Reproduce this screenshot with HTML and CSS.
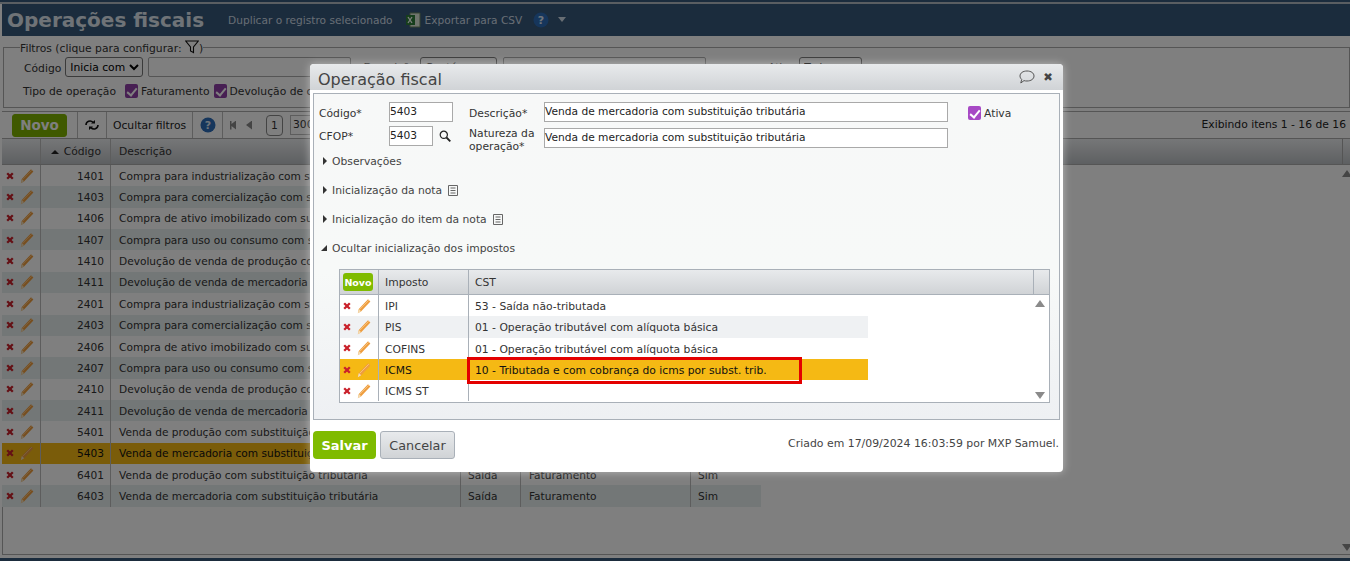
FILE: index.html
```html
<!DOCTYPE html>
<html lang="pt-BR">
<head>
<meta charset="utf-8">
<title>Operações fiscais</title>
<link rel="stylesheet" href="styles.css">
</head>
<body>
<svg width="0" height="0" class="defs">
  <symbol id="x" viewBox="0 0 8 8"><path d="M1.2 1.200l5.600 5.600M6.800 1.200l-5.600 5.600" stroke="#c9202a" stroke-width="2.300"/></symbol>
  <symbol id="pen" viewBox="0 0 14 16"><path d="M.8 15.200l1-4.200L11 1.300l2.400 2.200-9.200 9.700z" fill="#ee9d3e"/><path d="M.8 15.200l1-4.200 2.400 2.200z" fill="#f3dcb5"/><path d="M2.700 11.400L11.800 2.200" stroke="#f9c98a" stroke-width=".8"/></symbol>
  <symbol id="help" viewBox="0 0 16 16"><circle cx="8" cy="8" r="7.500" fill="#2c6cb8"/><text x="8" y="12" text-anchor="middle" font-size="11" font-weight="700" font-family="DejaVu Sans" fill="#dfe9f5">?</text></symbol>
  <symbol id="doc" viewBox="0 0 10 11"><path d="M.5.5h9v10h-9zM2.500 3h5M2.500 5.500h5M2.500 8h5" fill="none" stroke="#666"/></symbol>
</svg>

<div class="page">
  <header class="top">
    <h1>Operações fiscais</h1>
    <span class="top-link">Duplicar o registro selecionado</span>
    <svg class="xls" viewBox="0 0 16 16" width="16" height="16"><path d="M5 1h10v14H5z" fill="#dfe8da" stroke="#6f8a63"/><path d="M1 3h9v10H1z" fill="#2d7d38"/><path d="M3 5l4 6M7 5l-4 6" stroke="#fff" stroke-width="1.300"/></svg>
    <span class="top-link">Exportar para CSV</span>
    <svg class="top-help" width="16" height="16"><use href="#help"/></svg>
    <span class="caret"></span>
  </header>

  <fieldset class="filters">
    <legend>Filtros (clique para configurar: <svg class="funnel" viewBox="0 0 14 14" width="14" height="14"><path d="M.7 1h12.600L8.500 7v5.500L5.500 11V7z" fill="none" stroke="#111" stroke-width="1.100"/></svg>)</legend>
    <div class="filter-row">
      <span class="f-code">Código</span>
      <select class="sel"><option>Inicia com</option></select>
      <span class="blank-input"></span>
      <span class="hidden-label">Descrição</span>
      <select class="sel sel2"><option>Contém</option></select>
      <span class="blank-input input2"></span>
      <span class="hidden-label label3">Ativa</span>
      <select class="sel sel3"><option>Todos</option></select>
    </div>
    <div class="filter-row second">
      <span>Tipo de operação</span>
      <span class="chk"></span><span class="lbl">Faturamento</span>
      <span class="chk"></span><span class="lbl">Devolução de compra</span>
    </div>
  </fieldset>

  <div class="toolbar">
    <button class="new">Novo</button>
    <span class="tool refresh"><svg viewBox="0 0 14 12" width="14" height="12"><path d="M1 6a4 4 0 0 1 7-2.600M13 6a4 4 0 0 1-7 2.600" fill="none" stroke="#111" stroke-width="1.600"/><path d="M6 4.500h4V1zM8 7.500H4V11z" fill="#111"/></svg></span>
    <span class="tool hide-f">Ocultar filtros</span>
    <span class="tool help"><svg width="16" height="16"><use href="#help"/></svg></span>
    <span class="pager">
      <span class="pg-first"></span><span class="pg-prev"></span>
      <span class="pg-num">1</span><span class="pg-size">300</span>
    </span>
    <span class="count">Exibindo itens 1 - 16 de 16</span>
  </div>

  <div class="grid-head">
    <span class="c-act"></span>
    <span class="c-code"><i class="asc"></i>Código</span>
    <span class="c-desc">Descrição</span>
    <span class="c-rest"></span>
    <span class="c-end"></span>
  </div>

  <div class="grid-wrap">
    <div class="grid">
      <div class="row"><span class="c-act"><svg class="ix"><use href="#x"/></svg><svg class="ip"><use href="#pen"/></svg></span><span class="c-code">1401</span><span class="c-desc">Compra para industrialização com substituição tributária</span><span class="c-a">Entrada</span><span class="c-b">Faturamento</span><span class="c-s">Sim</span></div>
      <div class="row"><span class="c-act"><svg class="ix"><use href="#x"/></svg><svg class="ip"><use href="#pen"/></svg></span><span class="c-code">1403</span><span class="c-desc">Compra para comercialização com substituição tributária</span><span class="c-a">Entrada</span><span class="c-b">Faturamento</span><span class="c-s">Sim</span></div>
      <div class="row"><span class="c-act"><svg class="ix"><use href="#x"/></svg><svg class="ip"><use href="#pen"/></svg></span><span class="c-code">1406</span><span class="c-desc">Compra de ativo imobilizado com substituição tributária</span><span class="c-a">Entrada</span><span class="c-b">Faturamento</span><span class="c-s">Sim</span></div>
      <div class="row"><span class="c-act"><svg class="ix"><use href="#x"/></svg><svg class="ip"><use href="#pen"/></svg></span><span class="c-code">1407</span><span class="c-desc">Compra para uso ou consumo com substituição tributária</span><span class="c-a">Entrada</span><span class="c-b">Faturamento</span><span class="c-s">Sim</span></div>
      <div class="row"><span class="c-act"><svg class="ix"><use href="#x"/></svg><svg class="ip"><use href="#pen"/></svg></span><span class="c-code">1410</span><span class="c-desc">Devolução de venda de produção com substituição tributária</span><span class="c-a">Entrada</span><span class="c-b">Devolução</span><span class="c-s">Sim</span></div>
      <div class="row"><span class="c-act"><svg class="ix"><use href="#x"/></svg><svg class="ip"><use href="#pen"/></svg></span><span class="c-code">1411</span><span class="c-desc">Devolução de venda de mercadoria com substituição tributária</span><span class="c-a">Entrada</span><span class="c-b">Devolução</span><span class="c-s">Sim</span></div>
      <div class="row"><span class="c-act"><svg class="ix"><use href="#x"/></svg><svg class="ip"><use href="#pen"/></svg></span><span class="c-code">2401</span><span class="c-desc">Compra para industrialização com substituição tributária</span><span class="c-a">Entrada</span><span class="c-b">Faturamento</span><span class="c-s">Sim</span></div>
      <div class="row"><span class="c-act"><svg class="ix"><use href="#x"/></svg><svg class="ip"><use href="#pen"/></svg></span><span class="c-code">2403</span><span class="c-desc">Compra para comercialização com substituição tributária</span><span class="c-a">Entrada</span><span class="c-b">Faturamento</span><span class="c-s">Sim</span></div>
      <div class="row"><span class="c-act"><svg class="ix"><use href="#x"/></svg><svg class="ip"><use href="#pen"/></svg></span><span class="c-code">2406</span><span class="c-desc">Compra de ativo imobilizado com substituição tributária</span><span class="c-a">Entrada</span><span class="c-b">Faturamento</span><span class="c-s">Sim</span></div>
      <div class="row"><span class="c-act"><svg class="ix"><use href="#x"/></svg><svg class="ip"><use href="#pen"/></svg></span><span class="c-code">2407</span><span class="c-desc">Compra para uso ou consumo com substituição tributária</span><span class="c-a">Entrada</span><span class="c-b">Faturamento</span><span class="c-s">Sim</span></div>
      <div class="row"><span class="c-act"><svg class="ix"><use href="#x"/></svg><svg class="ip"><use href="#pen"/></svg></span><span class="c-code">2410</span><span class="c-desc">Devolução de venda de produção com substituição tributária</span><span class="c-a">Entrada</span><span class="c-b">Devolução</span><span class="c-s">Sim</span></div>
      <div class="row"><span class="c-act"><svg class="ix"><use href="#x"/></svg><svg class="ip"><use href="#pen"/></svg></span><span class="c-code">2411</span><span class="c-desc">Devolução de venda de mercadoria com substituição tributária</span><span class="c-a">Entrada</span><span class="c-b">Devolução</span><span class="c-s">Sim</span></div>
      <div class="row"><span class="c-act"><svg class="ix"><use href="#x"/></svg><svg class="ip"><use href="#pen"/></svg></span><span class="c-code">5401</span><span class="c-desc">Venda de produção com substituição tributária</span><span class="c-a">Saída</span><span class="c-b">Faturamento</span><span class="c-s">Sim</span></div>
      <div class="row sel-row"><span class="c-act"><svg class="ix"><use href="#x"/></svg><svg class="ip"><use href="#pen"/></svg></span><span class="c-code">5403</span><span class="c-desc">Venda de mercadoria com substituição tributária</span><span class="c-a">Saída</span><span class="c-b">Faturamento</span><span class="c-s">Sim</span></div>
      <div class="row"><span class="c-act"><svg class="ix"><use href="#x"/></svg><svg class="ip"><use href="#pen"/></svg></span><span class="c-code">6401</span><span class="c-desc">Venda de produção com substituição tributária</span><span class="c-a">Saída</span><span class="c-b">Faturamento</span><span class="c-s">Sim</span></div>
      <div class="row"><span class="c-act"><svg class="ix"><use href="#x"/></svg><svg class="ip"><use href="#pen"/></svg></span><span class="c-code">6403</span><span class="c-desc">Venda de mercadoria com substituição tributária</span><span class="c-a">Saída</span><span class="c-b">Faturamento</span><span class="c-s">Sim</span></div>
    </div>
    <span class="sb-up"></span>
    <span class="sb-down"></span>
  </div>
  <div class="foot"></div>
</div>

<div class="overlay"></div>

<section class="dialog">
  <div class="dlg-title">
    <span>Operação fiscal</span>
    <svg class="bubble" viewBox="0 0 16 14" width="16" height="14"><path d="M8 1c4 0 7 2 7 5s-3 5-7 5c-1 0-2 0-3-.4L1.800 13l.9-3.600C1.600 8.500 1 7.300 1 6c0-3 3-5 7-5z" fill="none" stroke="#555"/></svg>
    <span class="close">✖</span>
  </div>
  <div class="dlg-body">
    <div class="fields">
      <div class="f-col1">
        <div class="f-line"><label>Código*</label><span class="inp w-code">5403</span></div>
        <div class="f-line cfop"><label>CFOP*</label><span class="inp w-cfop">5403</span>
          <svg class="lens" viewBox="0 0 12 12" width="12" height="12"><circle cx="4.800" cy="4.800" r="3.600" fill="none" stroke="#222" stroke-width="1.200"/><path d="M7.500 7.500L11.300 11.300" stroke="#222" stroke-width="1.800"/></svg></div>
      </div>
      <div class="f-col2">
        <div class="f-line"><label class="lab2">Descrição*</label><span class="inp w-desc">Venda de mercadoria com substituição tributária</span></div>
        <div class="f-line"><label class="lab2 two">Natureza da operação*</label><span class="inp w-desc">Venda de mercadoria com substituição tributária</span></div>
      </div>
      <div class="active"><span class="chk bright"></span><span class="active-text">Ativa</span></div>
    </div>

    <div class="sec s-obs"><i class="tri"></i>Observações</div>
    <div class="sec s-nota"><i class="tri"></i>Inicialização da nota<svg class="doc"><use href="#doc"/></svg></div>
    <div class="sec s-item"><i class="tri"></i>Inicialização do item da nota<svg class="doc"><use href="#doc"/></svg></div>
    <div class="sec s-imp"><i class="tri-open"></i>Ocultar inicialização dos impostos</div>

    <div class="tax">
      <div class="tax-head">
        <span class="t-act"><button class="new-mini">Novo</button></span>
        <span class="t-imp">Imposto</span>
        <span class="t-cst">CST</span>
        <span class="t-end"></span>
      </div>
      <div class="tax-body">
        <div class="t-rows">
          <div class="t-row"><span class="t-act"><svg class="ix"><use href="#x"/></svg><svg class="ip"><use href="#pen"/></svg></span><span class="t-imp">IPI</span><span class="t-cst">53 - Saída não-tributada</span></div>
          <div class="t-row"><span class="t-act"><svg class="ix"><use href="#x"/></svg><svg class="ip"><use href="#pen"/></svg></span><span class="t-imp">PIS</span><span class="t-cst">01 - Operação tributável com alíquota básica</span></div>
          <div class="t-row"><span class="t-act"><svg class="ix"><use href="#x"/></svg><svg class="ip"><use href="#pen"/></svg></span><span class="t-imp">COFINS</span><span class="t-cst">01 - Operação tributável com alíquota básica</span></div>
          <div class="t-row picked"><span class="t-act"><svg class="ix"><use href="#x"/></svg><svg class="ip"><use href="#pen"/></svg></span><span class="t-imp">ICMS</span><span class="t-cst">10 - Tributada e com cobrança do icms por subst. trib.</span></div>
          <div class="t-row"><span class="t-act"><svg class="ix"><use href="#x"/></svg><svg class="ip"><use href="#pen"/></svg></span><span class="t-imp">ICMS ST</span><span class="t-cst"></span></div>
        </div>
        <span class="sb-up"></span>
        <span class="sb-down"></span>
      </div>
      <span class="red-box"></span>
    </div>
  </div>
  <div class="dlg-foot">
    <button class="save">Salvar</button>
    <button class="cancel">Cancelar</button>
    <span class="created">Criado em 17/09/2024 16:03:59 por MXP Samuel.</span>
  </div>
</section>
</body>
</html>
```
FILE: styles.css
```css
* { box-sizing: border-box; }
html, body { margin: 0; height: 100%; overflow: hidden; }
body { font: 10.75px "DejaVu Sans", sans-serif; color: #333; background: #fff; position: relative; }
.defs { position: absolute; }
.page { height: 561px; display: flex; flex-direction: column; background: linear-gradient(#36587a 2px, #b4bcc4 2px, #b4bcc4 4px, #fff 4px); padding-top: 4px; }

.top { height: 32px; margin-left: 2px; background: #36587a; display: flex; align-items: center; color: #d0dce8; flex: none; }
.top h1 { margin: 0 24px 0 5px; font-size: 20px; font-weight: 700; color: #dfe6ee; white-space: nowrap; }
.top-link { white-space: nowrap; font-size: 10.6px; }
.xls { margin: 0 4px 0 12px; }
.top-help { margin: 0 9px 0 11px; }
.caret { border: 4px solid transparent; border-top: 5px solid #d0dce8; margin-top: 3px; }

.filters { margin: 4px 0 0 3px; padding: 0 0 0 20px; height: 68px; border: 1px solid #aaa; flex: none; min-width: 0; }
.filters legend { padding: 0; margin-left: -4px; line-height: 13px; }
.funnel { vertical-align: -2px; }
.filter-row { display: flex; align-items: center; gap: 4px; height: 20px; margin-top: 2px; white-space: nowrap; }
.f-code { padding-top: 3px; }
.filter-row.second { margin-top: 4px; height: 20px; gap: 3px; margin-left: -1px; }
.filter-row.second > span:first-child { margin-right: 6px; }
.sel { height: 20px; width: 78px; font: 10.75px "DejaVu Sans", sans-serif; background: #fff; border: 1px solid #777; border-radius: 3px; padding: 0; flex: none; }
.blank-input { width: 203px; height: 20px; margin-left: 1px; border: 1px solid #aaa; border-radius: 2px; background: #fff; flex: none; }
.hidden-label { width: 61px; text-align: right; }
.sel2 { width: 77px; }
.input2 { width: 203px; margin-left: 2px; }
.label3 { width: 85px; }
.sel3 { width: 63px; }
.chk { width: 13px; height: 14px; border-radius: 2px; background: #8e3fa6; position: relative; display: inline-block; flex: none; }
.chk::after { content: ""; position: absolute; left: 4px; top: 2px; width: 4px; height: 8px; border: solid #fff; border-width: 0 2px 2px 0; transform: rotate(40deg); }
.chk.bright { background: #a749c5; margin-right: 2px; }
.lbl { margin-right: 1px; }

.toolbar { height: 28px; margin: 3px 0 0 2px; border: 1px solid #aaa; border-width: 1px 0; display: flex; align-items: center; padding-left: 10px; position: relative; flex: none; }
.new { width: 55px; height: 23px; border: 1px solid #7fb200; border-radius: 3px; background: #7fb200; color: #fff; font: 700 13.5px "DejaVu Sans", sans-serif; padding: 0; }
.tool { height: 100%; display: flex; align-items: center; border-left: 1px solid #bbb; padding: 0 6px; color: #222; white-space: nowrap; }
.refresh { margin-left: 10px; width: 29px; padding: 0 0 0 7px; }
.hide-f { padding: 0 6px; width: 86px; }
.help { padding: 0 6px 0 7px; width: 30px; }
.pager { height: 100%; display: flex; align-items: center; border-left: 1px solid #bbb; padding-left: 7px; }
.pg-first, .pg-prev { display: inline-block; height: 9px; background: #888; }
.pg-first { width: 6px; clip-path: polygon(0 0, 25% 0, 25% 40%, 100% 0, 100% 100%, 25% 60%, 25% 100%, 0 100%); margin-right: 10px; }
.pg-prev { width: 6px; clip-path: polygon(100% 0, 100% 100%, 0 50%); }
.pg-num { width: 17px; height: 21px; border: 1px solid #888; border-radius: 4px; text-align: center; line-height: 19px; margin-left: 14px; }
.pg-size { width: 40px; height: 20px; border: 1px solid #bbb; line-height: 18px; padding-left: 2px; margin-left: 7px; }
.count { position: absolute; right: 4px; top: 6px; color: #222; white-space: nowrap; }

.grid-head { height: 26px; margin-left: 2px; display: flex; background: linear-gradient(#eceef0, #bcc0c4); border-bottom: 1px solid #aaa; align-items: center; flex: none; }
.c-act { width: 39px; height: 100%; display: flex; align-items: center; padding-left: 4px; gap: 6px; border-right: 1px solid #bbb; flex: none; }
.c-code { width: 70px; height: 100%; display: flex; align-items: center; justify-content: flex-end; padding-right: 6px; border-right: 1px solid #bbb; flex: none; gap: 5px; }
.grid-head .c-code { padding-right: 9px; }
.c-desc { width: 350px; height: 100%; display: flex; align-items: center; padding-left: 8px; border-right: 1px solid #bbb; flex: none; white-space: nowrap; overflow: hidden; }
.c-rest { flex: 1; height: 100%; }
.c-end { width: 8px; height: 100%; border-left: 1px solid #aaa; }
.asc { border: 4px solid transparent; border-bottom: 4px solid #222; border-top: 0; display: inline-block; }
.c-a { width: 60px; height: 100%; display: flex; align-items: center; padding-left: 7px; border-right: 1px solid #bbb; flex: none; }
.c-b { width: 170px; height: 100%; display: flex; align-items: center; padding-left: 8px; border-right: 1px solid #bbb; flex: none; }
.c-s { width: 70px; height: 100%; display: flex; align-items: center; padding-left: 7px; flex: none; }

.grid-wrap { flex: 1; margin-left: 2px; border-left: 1px solid #aaa; border-bottom: 1px solid #aaa; position: relative; min-height: 0; }
.grid { width: 759px; margin-left: -1px; }
.row { display: flex; height: 21.36px; background: #fff; font-size: 10.6px; }
.row:nth-child(even) { background: #e6eeee; }
.row.sel-row { background: #f5b914; color: #111; }
.ix { width: 8px; height: 8px; flex: none; }
.ip { width: 14px; height: 16px; flex: none; }
.sb-up, .sb-down { position: absolute; right: -2px; border: 5px solid transparent; }
.sb-up { top: 5px; border-top: 0; border-bottom: 7px solid #8a8a8a; }
.sb-down { bottom: 3px; border-bottom: 0; border-top: 7px solid #8a8a8a; }
.foot { height: 6px; background: linear-gradient(#fff 3px, #36587a 3px); flex: none; }

.overlay { position: absolute; inset: 0; background: rgba(0, 0, 0, .5); }

.dialog { position: absolute; left: 310px; top: 64px; width: 753px; height: 408px; background: #fff; border-radius: 4px; box-shadow: 0 0 8px rgba(255, 255, 255, .45); display: flex; flex-direction: column; }
.dlg-title { height: 26px; flex: none; background: linear-gradient(#e8eaec, #d0d3d6); border-radius: 4px 4px 0 0; display: flex; align-items: center; padding: 4px 10px 0 8px; font-size: 16px; color: #444; }
.dlg-title > span:first-child { flex: 1; }
.bubble { margin: -5px 8px 0 0; }
.close { font-size: 11.5px; color: #444; margin-top: -4px; }
.dlg-body { height: 327px; flex: none; margin: 3px 3px 0 3px; border: 1px solid #a9b0b8; background: linear-gradient(#f7f8f8 0, #f7f9f8 55%, #eef0f3 100%); position: relative; padding: 8px 0 0 5px; display: flex; flex-direction: column; }
.fields { display: flex; height: 46px; flex: none; }
.f-col1 { width: 150px; display: flex; flex-direction: column; gap: 4px; }
.f-col2 { display: flex; flex-direction: column; gap: 6px; }
.f-line { display: flex; align-items: center; height: 20px; }
.f-line label { width: 70px; color: #333; flex: none; padding-top: 2px; }
.f-line.cfop label { padding-top: 0; }
.f-col2 .f-line label { width: 75px; }
.lab2.two { line-height: 13px; padding-top: 4px; }
.inp { height: 20px; border: 1px solid #a9a9a9; background: #fff; display: block; line-height: 17px; padding-left: 0; color: #222; white-space: nowrap; font-size: 10.65px; }
.w-code { width: 64px; }
.w-cfop { width: 44px; }
.w-desc { width: 404px; }
.lens { margin-left: 6px; }
.active { margin-left: 20px; display: flex; align-items: center; height: 21px; gap: 1px; }
.active-text { padding-top: 2px; }
.sec { display: flex; align-items: center; height: 14px; flex: none; color: #444; position: relative; }
.s-obs { margin-top: 6px; }
.s-nota, .s-item, .s-imp { margin-top: 15px; }
.tri { border: 4px solid transparent; border-left: 4px solid #333; border-right: 0; margin: 0 5px 0 4px; }
.tri-open { width: 6px; height: 6px; background: #333; clip-path: polygon(100% 0, 100% 100%, 0 100%); margin: 0 5px 0 2px; }
.doc { width: 10px; height: 11px; margin-left: 6px; }

.tax { position: absolute; left: 25px; top: 175px; width: 711px; height: 134px; border: 1px solid #a9b0b8; background: #fff; }
.tax-head { display: flex; height: 25px; background: linear-gradient(#e8eaec, #d0d3d6); border-bottom: 1px solid #a9b0b8; }
.t-act { width: 39px; flex: none; height: 100%; display: flex; align-items: center; padding-left: 3px; gap: 6px; border-right: 1px solid #a9b0b8; }
.t-imp { width: 90px; flex: none; height: 100%; display: flex; align-items: center; padding-left: 6px; border-right: 1px solid #a9b0b8; }
.t-cst { flex: 1; height: 100%; display: flex; align-items: center; padding-left: 6px; white-space: nowrap; }
.t-row .t-imp, .t-row .t-cst { padding-top: 2px; }
.t-end { width: 16px; border-left: 1px solid #a9b0b8; }
.new-mini { width: 30px; height: 18px; border: 0; border-radius: 3px; background: #7fbb00; color: #fff; font: 700 9.5px "DejaVu Sans", sans-serif; padding: 0; }
.tax-body { position: relative; height: 107px; }
.t-rows { width: 528px; }
.t-row { display: flex; height: 21.3px; background: #fff; }
.t-row:nth-child(even) { background: #eff1f3; }
.t-row.picked { background: #f5b914; color: #111; }
.tax-body .sb-up, .tax-body .sb-down { right: 4px; }
.red-box { position: absolute; left: 127px; top: 87px; width: 335px; height: 27px; border: 3px solid #e30000; }

.dlg-foot { flex: 1; display: flex; align-items: flex-start; padding: 11px 4px 0 3px; position: relative; }
.save { width: 63px; height: 28px; border: 0; border-radius: 4px; background: #7fbb00; color: #fff; font: 700 13px "DejaVu Sans", sans-serif; padding: 0; }
.cancel { width: 75px; height: 28px; margin-left: 4px; border: 1px solid #a9b0b8; border-radius: 3px; background: linear-gradient(#e8eaec, #d0d3d6); color: #444; font: 12.8px "DejaVu Sans", sans-serif; padding: 0; }
.created { margin-left: auto; padding-top: 6px; color: #444; font-size: 10.9px; }
```
